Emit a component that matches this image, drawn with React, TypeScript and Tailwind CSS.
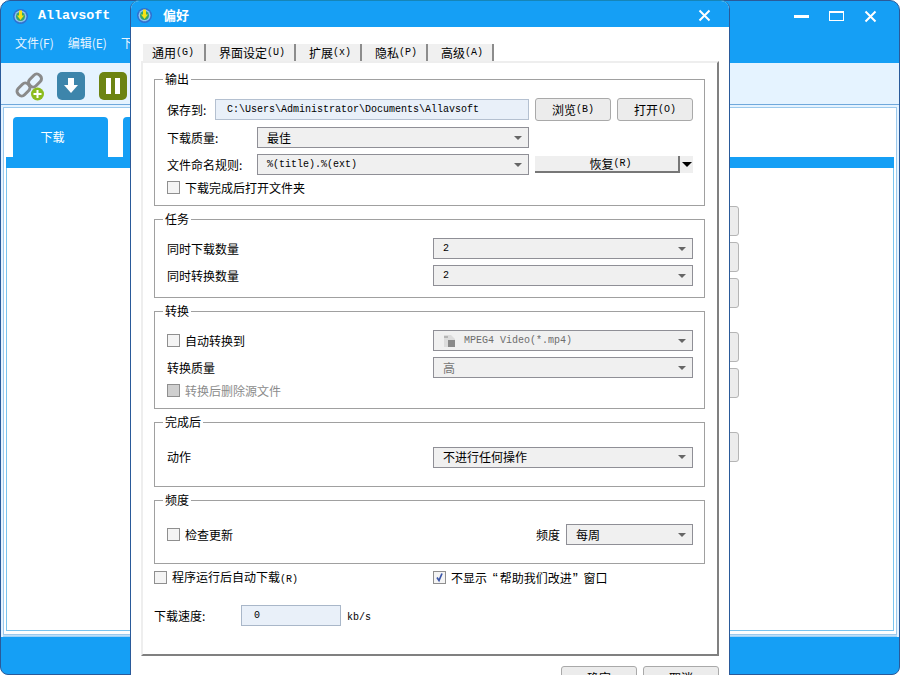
import { ReactNode } from 'react';

const CJK = '"Noto Sans CJK SC", sans-serif';

function AppLogo() {
  return (
    <svg width="15" height="15" viewBox="0 0 15 15">
      <circle cx="7.5" cy="7.5" r="7.5" fill="#2f6fd0" />
      <circle cx="7.5" cy="7.5" r="6" fill="#8fc4ee" />
      <circle cx="7.5" cy="7.5" r="4.5" fill="#35a46a" />
      <path d="M6 1.5h3v5h2l-3.500 4.500-3.500-4.500h2z" fill="#f5e316" />
      <path d="M3 11.500q4.500 3 9 0l-4.500 2z" fill="#1f6fc0" />
    </svg>
  );
}

function Latin({ children, dim }: { children: ReactNode; dim?: boolean }) {
  return (
    <span className={`font-['Liberation_Mono',monospace] text-[10px] ${dim ? 'text-[#6d6d6d]' : ''}`}>
      {children}
    </span>
  );
}

function Arrow() {
  return <span className="ml-auto h-0 w-0 border-x-[4px] border-t-[4px] border-x-transparent border-t-[#666]" />;
}

function Select({ children, className, dim }: { children: ReactNode; className: string; dim?: boolean }) {
  return (
    <div
      className={`flex h-[21px] items-center border border-[#8f8f96] bg-[#f0f0f0] pl-[9px] pr-[6px] text-[12px] ${
        dim ? 'text-[#777]' : 'text-black'
      } ${className}`}
    >
      {children}
      <Arrow />
    </div>
  );
}

function Check({ label, checked, disabled, className = '' }: { label: ReactNode; checked?: boolean; disabled?: boolean; className?: string }) {
  return (
    <div className={`flex h-[13px] items-center gap-[5px] text-[12px] ${disabled ? 'text-[#8c8c8c]' : 'text-black'} ${className}`}>
      <span
        className={`flex h-[13px] w-[13px] items-center justify-center border border-[#8f8f8f] ${
          disabled ? 'bg-[#cfcfcf]' : 'bg-[#f4f4f4]'
        }`}
      >
        {checked && (
          <svg width="11" height="11" viewBox="0 0 11 11">
            <path d="M3 5.500l2 3 3-7" fill="none" stroke="#3b56a8" strokeWidth="1.700" />
          </svg>
        )}
      </span>
      {label}
    </div>
  );
}

function Group({ title, className, children }: { title: string; className: string; children: ReactNode }) {
  return (
    <div className={`relative border border-[#a0a0a0] pl-[12px] pr-[11px] ${className}`}>
      <span className="absolute -top-[10px] left-[8px] bg-white px-[2px] text-[12px] leading-[17px] text-black">{title}</span>
      {children}
    </div>
  );
}

function DialogTab({ children, className }: { children: ReactNode; className: string }) {
  return (
    <div className={`flex h-[17px] items-center border-r-2 border-[#8c8c8c] bg-[#f0f0f0] text-[12px] leading-none text-black ${className}`}>
      {children}
    </div>
  );
}

function DialogButton({ children, className = '' }: { children: ReactNode; className?: string }) {
  return (
    <div
      className={`flex h-[23px] w-[76px] items-center justify-center rounded-[3px] border border-[#a9a9a9] bg-[#ececec] text-[12px] text-black ${className}`}
    >
      {children}
    </div>
  );
}

function Preferences() {
  return (
    <div
      className="absolute left-[130px] top-0 flex h-[690px] w-[600px] flex-col rounded-t-[9px] border-x border-t border-x-[#2a5a9a] border-t-[#1585b8] bg-white"
      style={{ fontFamily: CJK }}
    >
      {/* Title bar */}
      <div className="flex h-[26px] shrink-0 items-center rounded-t-[8px] bg-[#159ff5] pl-[6px] pr-[18px] pt-[2px]">
        <AppLogo />
        <span className="ml-[11px] text-[13px] font-bold text-white">偏好</span>
        <svg className="ml-auto" width="13" height="13" viewBox="0 0 13 13">
          <path d="M1.500 1.500l10 10M11.500 1.500l-10 10" stroke="#fff" strokeWidth="2" />
        </svg>
      </div>

      {/* Tabs */}
      <div className="mt-[17px] flex items-end pl-[12px]">
        <DialogTab className="w-[63px] pl-[9px]">通用<Latin>(G)</Latin></DialogTab>
        <DialogTab className="w-[90px] pl-[13px]">界面设定<Latin>(U)</Latin></DialogTab>
        <DialogTab className="w-[66px] pl-[13px]">扩展<Latin>(x)</Latin></DialogTab>
        <DialogTab className="w-[66px] pl-[13px]">隐私<Latin>(P)</Latin></DialogTab>
        <DialogTab className="w-[66px] pl-[13px]">高级<Latin>(A)</Latin></DialogTab>
      </div>

      {/* Tab panel */}
      <div className="ml-[10px] flex h-[595px] w-[578px] flex-col border-2 border-b-[#808080] border-r-[#808080] border-l-[#eeeeee] border-t-[#eeeeee] pl-[11px] pr-[12px] pt-[16px]">
        <Group title="输出" className="h-[127px] pt-[18px]">
          <div className="flex h-[23px] items-center text-[12px] text-black">
            <span className="w-[48px]">保存到:</span>
            <div className="flex h-[21px] w-[314px] items-center border border-[#b4c0d0] bg-[#e9f0f9] pl-[11px]">
              <Latin>C:\Users\Administrator\Documents\Allavsoft</Latin>
            </div>
            <DialogButton className="ml-[6px]">浏览<Latin>(B)</Latin></DialogButton>
            <DialogButton className="ml-[6px]">打开<Latin>(O)</Latin></DialogButton>
          </div>
          <div className="mt-[6px] flex items-center text-[12px] text-black">
            <span className="w-[90px]">下载质量:</span>
            <Select className="w-[272px]">最佳</Select>
          </div>
          <div className="mt-[6px] flex items-center text-[12px] text-black">
            <span className="w-[90px]">文件命名规则:</span>
            <Select className="w-[272px]"><Latin>%(title).%(ext)</Latin></Select>
            <div className="ml-[6px] flex h-[17px] w-[145px] items-center justify-center border-b-2 border-r-2 border-[#777] bg-[#efefef] pl-[8px]">
              恢复<Latin>(R)</Latin>
            </div>
            <div className="flex h-[17px] w-[13px] items-center justify-center bg-[#efefef]">
              <span className="h-0 w-0 border-x-[5px] border-t-[5px] border-x-transparent border-t-black" />
            </div>
          </div>
          <Check className="mt-[6px]" label="下载完成后打开文件夹" />
        </Group>

        <Group title="任务" className="mt-[13px] h-[79px] pt-[18px] text-[12px] text-black">
          <div className="flex items-center justify-between">
            <span>同时下载数量</span>
            <Select className="w-[260px]"><Latin>2</Latin></Select>
          </div>
          <div className="mt-[6px] flex items-center justify-between">
            <span>同时转换数量</span>
            <Select className="w-[260px]"><Latin>2</Latin></Select>
          </div>
        </Group>

        <Group title="转换" className="mt-[13px] h-[98px] pt-[18px] text-[12px] text-black">
          <div className="flex items-center justify-between">
            <Check label="自动转换到" />
            <Select className="w-[260px]" dim>
              <svg className="mr-[8px]" width="13" height="14" viewBox="0 0 13 14">
                <path d="M1 1h7l4 4v8H1z" fill="#dcdcdc" />
                <path d="M5 6h7v7H5z" fill="#8a8a8a" />
                <path d="M1 2h4v2H1z" fill="#b5b5b5" />
              </svg>
              <Latin dim>MPEG4 Video(*.mp4)</Latin>
            </Select>
          </div>
          <div className="mt-[6px] flex items-center justify-between">
            <span>转换质量</span>
            <Select className="w-[260px]" dim>高</Select>
          </div>
          <Check className="mt-[6px]" label="转换后删除源文件" disabled />
        </Group>

        <Group title="完成后" className="mt-[13px] flex h-[65px] items-center justify-between pt-[5px] text-[12px] text-black">
          <span>动作</span>
          <Select className="w-[260px]">不进行任何操作</Select>
        </Group>

        <Group title="频度" className="mt-[13px] flex h-[64px] items-center pt-[5px] text-[12px] text-black">
          <Check label="检查更新" />
          <span className="ml-auto mr-[6px]">频度</span>
          <Select className="w-[127px]">每周</Select>
        </Group>

        <div className="mt-[7px] flex">
          <Check className="w-[279px]" label={<span>程序运行后自动下载<Latin>(R)</Latin></span>} />
          <Check
            checked
            label={
              <span>
                不显示 <span className="ml-[3px] mr-[2px] font-['Liberation_Sans',sans-serif] text-[15px] leading-none">“</span>帮助我们改进<span className="ml-[1px] mr-[3px] font-['Liberation_Sans',sans-serif] text-[15px] leading-none">”</span> 窗口
              </span>
            }
          />
        </div>

        <div className="mt-[21px] flex items-center text-[12px] text-black">
          <span className="w-[87px]">下载速度:</span>
          <div className="flex h-[21px] w-[100px] items-center border border-[#a9b7c9] bg-[#e9f0f9] pl-[12px]">
            <Latin>0</Latin>
          </div>
          <span className="ml-[6px]"><Latin>kb/s</Latin></span>
        </div>
      </div>

      {/* Footer buttons */}
      <div className="mt-[10px] flex justify-end gap-[6px] pr-[10px]">
        <DialogButton>确定</DialogButton>
        <DialogButton>取消</DialogButton>
      </div>
    </div>
  );
}

function ToolButton({ className }: { className: string }) {
  return <div className={`mr-[154px] h-[30px] w-[30px] rounded-[3px] border border-[#b5b5b5] bg-[#ececec] ${className}`} />;
}

function MainWindow() {
  return (
    <div
      className="flex h-full flex-col rounded-t-[10px] rounded-b-[8px] border border-[#2a5a9a] bg-[#159ff5] text-white"
      style={{ fontFamily: CJK }}
    >
      {/* Title */}
      <div className="flex h-[29px] shrink-0 items-center pl-[12px] pr-[22px] pt-[1px]">
        <AppLogo />
        <span className="ml-[10px] font-['Liberation_Mono',monospace] text-[13.4px] font-bold">Allavsoft</span>
        <div className="ml-auto flex items-center gap-[20px]">
          <span className="h-[3px] w-[15px] bg-white" />
          <span className="h-[10px] w-[15px] border-x border-b border-t-2 border-white" />
          <svg width="13" height="13" viewBox="0 0 13 13">
            <path d="M1.500 1.500l10 10M11.500 1.500l-10 10" stroke="#fff" strokeWidth="2" />
          </svg>
        </div>
      </div>

      {/* Menu */}
      <div className="flex h-[33px] shrink-0 gap-[14px] pl-[14px] pt-[4px] text-[12px] text-[#e8f4ff]">
        <span>文件(F)</span>
        <span>编辑(E)</span>
        <span>下载(D)</span>
      </div>

      {/* Toolbar */}
      <div className="flex h-[41px] shrink-0 items-center bg-[#e5f3ff] pl-[14px] pt-[5px]">
        <svg width="30" height="30" viewBox="0 0 30 30">
          <g fill="none" stroke="#8a8a8a" strokeWidth="3">
            <rect x="1.500" y="14" width="14" height="9" rx="4" transform="rotate(-45 8.500 18.500)" />
            <rect x="13" y="5" width="14" height="9" rx="4" transform="rotate(-45 20 9.500)" />
          </g>
          <circle cx="22.500" cy="23" r="6.500" fill="#8cbc1e" />
          <path d="M22.500 19v8M18.500 23h8" stroke="#fff" strokeWidth="2" />
        </svg>
        <div className="ml-[12px] flex h-[28px] w-[28px] items-center justify-center rounded-[5px] bg-[#3d85ab]">
          <svg width="16" height="18" viewBox="0 0 16 18">
            <path d="M5 1h6v7h4l-7 8-7-8h4z" fill="#fff" />
          </svg>
        </div>
        <div className="ml-[14px] flex h-[28px] w-[28px] items-center justify-center gap-[4px] rounded-[5px] bg-[#6d8412]">
          <span className="h-[16px] w-[5px] bg-white" />
          <span className="h-[16px] w-[5px] bg-white" />
        </div>
      </div>

      {/* Content */}
      <div className="flex flex-1 flex-col border-t border-[#6fa8dc] bg-[#e5f3ff] px-[2px] pt-[2px]">
        <div className="flex h-[528px] flex-col border border-[#9cc9ec] bg-white px-[2px] pb-[3px]">
          <div className="flex h-[49px] shrink-0 items-end gap-[15px] pl-[7px]">
            <div className="flex h-[40px] w-[95px] items-center justify-center rounded-t-[4px] bg-[#159ff5] pr-[16px] text-[12px]">下载</div>
            <div className="h-[40px] w-[95px] rounded-t-[4px] bg-[#159ff5]" />
          </div>
          <div className="h-[11px] shrink-0 bg-[#159ff5]" />
          <div className="flex flex-1 flex-col items-end border-x border-b border-[#79c3ee] pt-[38px]">
            <ToolButton className="" />
            <ToolButton className="mt-[6px]" />
            <ToolButton className="mt-[6px]" />
            <ToolButton className="mt-[24px]" />
            <ToolButton className="mt-[6px]" />
            <ToolButton className="mt-[34px]" />
          </div>
        </div>
        <div className="h-[2px] bg-gradient-to-b from-[#cfe6f8] to-[#8fcaf5]" />
      </div>

      {/* Status strip */}
      <div className="h-[37px] shrink-0" />
    </div>
  );
}

export default function App() {
  return (
    <div className="relative h-[675px] w-[900px] overflow-hidden bg-white">
      <MainWindow />
      <Preferences />
    </div>
  );
}
